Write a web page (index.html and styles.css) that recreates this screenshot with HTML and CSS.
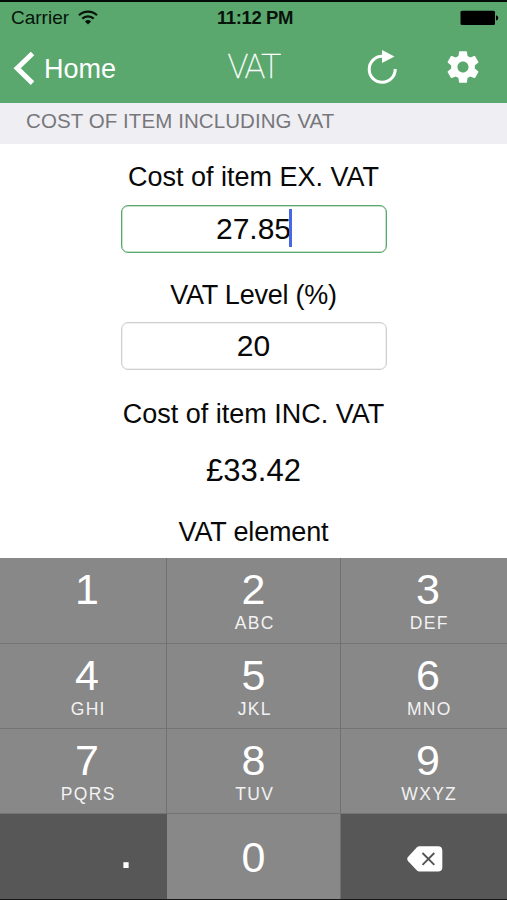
FILE: index.html
```html
<!DOCTYPE html>
<html lang="en">
<head>
<meta charset="utf-8">
<title>VAT</title>
<link rel="stylesheet" href="styles.css">
</head>
<body>
<div class="app">
  <header class="header">
    <div class="status">
      <div class="status-left">
        <span class="carrier">Carrier</span>
        <svg class="wifi" width="20" height="15" viewBox="0 0 20 15" fill="none" stroke="#07130b" stroke-width="2.2">
          <path d="M1 5.2a13 13 0 0 1 18 0"/>
          <path d="M4.3 8.6a8.3 8.3 0 0 1 11.4 0"/>
          <path d="M6.9 11.4a4.6 4.6 0 0 1 6.2 0L10 14.6z" fill="#07130b" stroke="none"/>
        </svg>
      </div>
      <span class="time">11:12 PM</span>
      <svg class="battery" width="39" height="16" viewBox="0 0 39 16">
        <rect x="0.5" y="0.8" width="34.5" height="14.2" rx="1.5"/>
        <path d="M36 5.2q2.3 .6 2.3 2.7T36 10.6z"/>
      </svg>
    </div>
    <nav class="nav">
      <a class="back">
        <svg width="22" height="34" viewBox="0 0 22 34" fill="none" stroke="#fff" stroke-width="5"><path d="M19.5 1.5 4.2 16.300l15.300 14.800"/></svg>
        <span class="back-text">Home</span>
      </a>
      <h1 class="title">VAT</h1>
      <div class="actions">
        <svg width="32" height="38" viewBox="0 0 32 38"><path d="M29.2 21a13 13 0 1 1-13-12.7" fill="none" stroke="#fff" stroke-width="3"/><path d="M16 2v13l12.5-6.5z" fill="#fff"/></svg>
        <svg width="38" height="38" viewBox="0 0 24 24" fill="#fff"><path d="M19.43 12.98c.04-.32.07-.64.07-.98s-.03-.66-.07-.98l2.11-1.65c.19-.15.24-.42.12-.64l-2-3.46c-.12-.22-.39-.3-.61-.22l-2.49 1c-.52-.4-1.08-.73-1.69-.98l-.38-2.65C14.46 2.18 14.25 2 14 2h-4c-.25 0-.46.18-.49.42l-.38 2.65c-.61.25-1.17.59-1.69.98l-2.49-1c-.23-.09-.49 0-.61.22l-2 3.46c-.13.22-.07.49.12.64l2.11 1.65c-.04.32-.07.65-.07.98s.03.66.07.98l-2.11 1.65c-.19.15-.24.42-.12.64l2 3.46c.12.22.39.3.61.22l2.49-1c.52.4 1.08.73 1.69.98l.38 2.65c.03.24.24.42.49.42h4c.25 0 .46-.18.49-.42l.38-2.65c.61-.25 1.17-.59 1.69-.98l2.49 1c.23.09.49 0 .61-.22l2-3.46c.12-.22.07-.49-.12-.64l-2.11-1.65zM12 15.5c-1.93 0-3.5-1.57-3.5-3.5s1.57-3.5 3.5-3.5 3.5 1.57 3.5 3.5-1.57 3.5-3.5 3.5z"/></svg>
      </div>
    </nav>
  </header>
  <h2 class="section"><span>COST OF ITEM INCLUDING VAT</span></h2>
  <main class="form">
    <div class="label">Cost of item EX. VAT</div>
    <div class="field field-active"><span>27.85</span><i class="caret"></i></div>
    <div class="label label-level">VAT Level (%)</div>
    <div class="field field-level"><span>20</span></div>
    <div class="label label-inc">Cost of item INC. VAT</div>
    <div class="value">£33.42</div>
    <div class="label label-element">VAT element</div>
  </main>
  <div class="keypad">
    <div class="key"><b>1</b></div>
    <div class="key"><b>2</b><small>ABC</small></div>
    <div class="key"><b>3</b><small>DEF</small></div>
    <div class="key"><b>4</b><small>GHI</small></div>
    <div class="key"><b>5</b><small>JKL</small></div>
    <div class="key"><b>6</b><small>MNO</small></div>
    <div class="key"><b>7</b><small>PQRS</small></div>
    <div class="key"><b>8</b><small>TUV</small></div>
    <div class="key"><b>9</b><small>WXYZ</small></div>
    <div class="key key-dark key-point"><b>.</b></div>
    <div class="key key-zero"><b>0</b></div>
    <div class="key key-dark key-delete">
      <svg width="36" height="26" viewBox="0 0 36 26"><path d="M12.5 .3H31q4.3 0 4.3 4.3v16.6q0 4.3-4.3 4.3H12.5q-1.6 0-2.8-1.2L1.2 15.2q-2-2.2 0-4.4L9.7 1.5Q10.9 .3 12.5 .3z" fill="#fff"/><path d="M15.5 7l11.8 11.8M27.3 7 15.5 18.8" stroke="#555" stroke-width="1.9" fill="none"/></svg>
    </div>
  </div>
</div>
</body>
</html>
```
FILE: styles.css
```css
* { box-sizing: border-box; }
body {
  margin: 0;
  background: #fff;
  color: #080808;
  font-family: "Liberation Sans", Arial, sans-serif;
}
svg { display: block; flex: none; }
.app {
  width: 507px;
  height: 900px;
  overflow: hidden;
  display: flex;
  flex-direction: column;
}
.header {
  height: 103px;
  background: #5aa86d;
  border-top: 2px solid #050b07;
  flex: none;
}
.status {
  height: 32px;
  padding: 0 8px 0 11px;
  display: grid;
  grid-template-columns: 1fr auto 1fr;
  align-items: center;
  color: #07130b;
  line-height: 32px;
}
.status-left { display: flex; align-items: center; gap: 9px; }
.wifi { margin-top: -2px; }
.carrier { font-size: 19px; }
.time { font-size: 18.5px; font-weight: bold; letter-spacing: -0.4px; }
.battery { justify-self: end; fill: #000; }
.nav {
  height: 66px;
  padding: 0 25px 0 13px;
  display: grid;
  grid-template-columns: 1fr auto 1fr;
  align-items: center;
  color: #fff;
}
.back { display: flex; align-items: center; gap: 9px; padding-top: 3px; font-size: 27px; line-height: 34px; }
.title {
  margin: 0;
  padding: 0 0 2px 12px;
  font-family: Roboto, sans-serif;
  font-weight: 100;
  font-size: 34px;
  line-height: 40px;
  letter-spacing: -2px;
  -webkit-text-stroke: 0.4px #fff;
}
.actions { display: flex; justify-content: flex-end; align-items: center; gap: 46px; }
.section {
  margin: 0;
  height: 41px;
  flex: none;
  padding-left: 26px;
  background: #efeef3;
  color: #77777b;
  font-size: 20.5px;
  font-weight: normal;
  line-height: 36px;
  letter-spacing: 0.08px;
}
.form {
  height: 414px;
  flex: none;
  padding-top: 17px;
  display: flex;
  flex-direction: column;
  align-items: center;
}
.label { font-size: 27px; line-height: 32px; white-space: nowrap; }
.field {
  margin-top: 12px;
  width: 266px;
  height: 48px;
  border: 1.5px solid #cfcfcf;
  border-radius: 7px;
  padding-bottom: 1px;
  display: flex;
  justify-content: center;
  align-items: center;
  font-size: 30px;
  line-height: 42px;
  box-shadow: inset 0 0 0 0.5px #e2e2e2;
}
.field-active { border-color: #5aa86d; box-shadow: inset 0 0 0 0.5px #8cc49a; }
.caret { width: 3px; height: 38px; background: #4867e0; margin: -2px -1px 0 -2px; }
.label-level { margin-top: 26px; letter-spacing: -0.25px; }
.field-level { margin-top: 11px; }
.label-inc { margin-top: 28px; }
.value { margin-top: 23px; font-size: 31px; line-height: 36px; }
.label-element { margin-top: 27px; letter-spacing: -0.15px; }
.keypad {
  flex: 1;
  display: grid;
  grid-template-columns: 167px 174px 166px;
  grid-template-rows: 86px 85px 85px 85px;
  border-bottom: 1px solid #171717;
  background: #888;
  color: #fff;
}
.key {
  padding-top: 6px;
  border-right: 1px solid #707072;
  border-bottom: 1px solid #747476;
  display: flex;
  flex-direction: column;
  align-items: center;
}
.key:nth-child(3n) { border-right: 0; padding-left: 8px; }
.key:nth-child(3n+1) { padding-left: 8px; }
.key b { font-weight: normal; font-size: 43px; line-height: 50px; }
.key small { font-size: 17.5px; line-height: 19px; letter-spacing: 1.3px; margin-right: -2.5px; color: #f2f2f2; }
.key.key-zero { padding-top: 18px; border-bottom: 0; }
.key.key-dark { background: #575757; border-color: #575757; }
.key.key-point { padding-left: 86px; padding-top: 10px; }
.key.key-point b { font-size: 54px; }
.key.key-delete { justify-content: center; padding: 5px 0 0 2px; }
```
